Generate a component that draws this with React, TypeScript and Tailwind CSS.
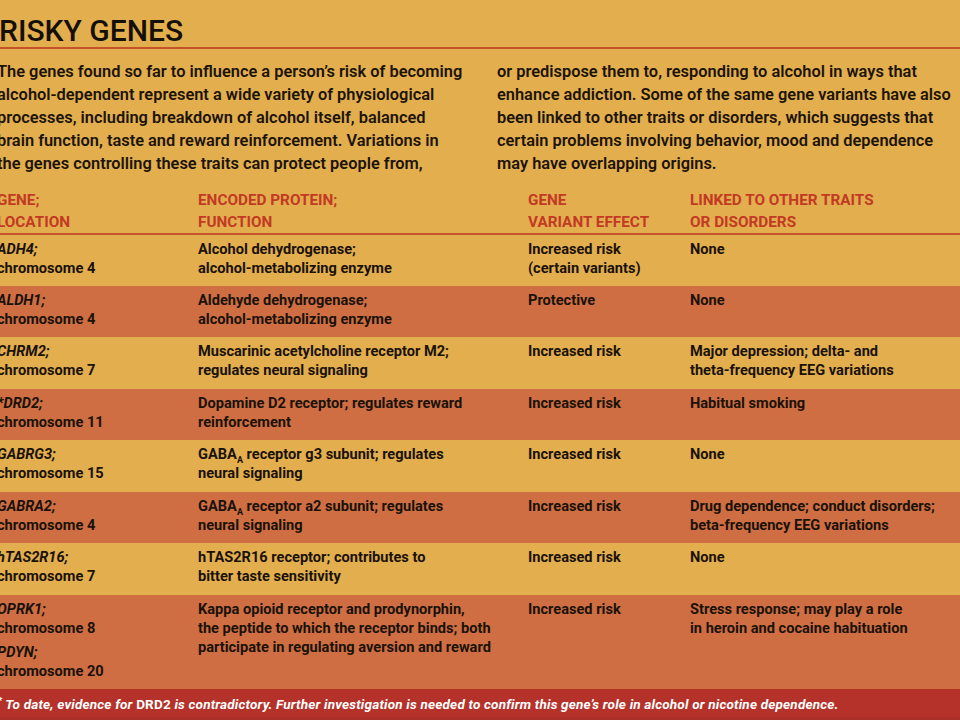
import React from "react";

type Row = {
  gene: React.ReactNode;
  protein: React.ReactNode;
  effect: React.ReactNode;
  linked: React.ReactNode;
  h: string;
  tone: "y" | "o";
};

const Gene = ({ name, loc }: { name: string; loc: string }) => (
  <div>
    <div className="italic">{name};</div>
    <div>{loc}</div>
  </div>
);

const GabaA = () => (
  <>
    GABA<sub className="text-[9px] align-[-2px]">A</sub>
  </>
);

const ROWS: Row[] = [
  {
    gene: <Gene name="ADH4" loc="chromosome 4" />,
    protein: <>Alcohol dehydrogenase;<br />alcohol-metabolizing enzyme</>,
    effect: <>Increased risk<br />(certain variants)</>,
    linked: "None",
    h: "h-[51px]",
    tone: "y",
  },
  {
    gene: <Gene name="ALDH1" loc="chromosome 4" />,
    protein: <>Aldehyde dehydrogenase;<br />alcohol-metabolizing enzyme</>,
    effect: "Protective",
    linked: "None",
    h: "h-[51px]",
    tone: "o",
  },
  {
    gene: <Gene name="CHRM2" loc="chromosome 7" />,
    protein: <>Muscarinic acetylcholine receptor M2;<br />regulates neural signaling</>,
    effect: "Increased risk",
    linked: <>Major depression; delta- and<br />theta-frequency EEG variations</>,
    h: "h-[52px]",
    tone: "y",
  },
  {
    gene: <Gene name="*DRD2" loc="chromosome 11" />,
    protein: <>Dopamine D2 receptor; regulates reward<br />reinforcement</>,
    effect: "Increased risk",
    linked: "Habitual smoking",
    h: "h-[51px]",
    tone: "o",
  },
  {
    gene: <Gene name="GABRG3" loc="chromosome 15" />,
    protein: <><GabaA /> receptor g3 subunit; regulates<br />neural signaling</>,
    effect: "Increased risk",
    linked: "None",
    h: "h-[52px]",
    tone: "y",
  },
  {
    gene: <Gene name="GABRA2" loc="chromosome 4" />,
    protein: <><GabaA /> receptor a2 subunit; regulates<br />neural signaling</>,
    effect: "Increased risk",
    linked: <>Drug dependence; conduct disorders;<br />beta-frequency EEG variations</>,
    h: "h-[51px]",
    tone: "o",
  },
  {
    gene: <Gene name="hTAS2R16" loc="chromosome 7" />,
    protein: <>hTAS2R16 receptor; contributes to<br />bitter taste sensitivity</>,
    effect: "Increased risk",
    linked: "None",
    h: "h-[52px]",
    tone: "y",
  },
  {
    gene: (
      <div className="flex flex-col gap-[5px]">
        <Gene name="OPRK1" loc="chromosome 8" />
        <Gene name="PDYN" loc="chromosome 20" />
      </div>
    ),
    protein: (
      <>
        Kappa opioid receptor and prodynorphin,
        <br />
        the peptide to which the receptor binds; both
        <br />
        participate in regulating aversion and reward
      </>
    ),
    effect: "Increased risk",
    linked: <>Stress response; may play a role<br />in heroin and cocaine habituation</>,
    h: "h-[94px]",
    tone: "o",
  },
];

export default function App() {
  return (
    <div
      className="w-[960px] h-[720px] overflow-hidden bg-[#e3ae4e] text-[#1c1408] flex flex-col"
      style={{ fontFamily: "Roboto, 'Noto Sans', sans-serif" }}
    >
      <div className="h-[49px] shrink-0 flex items-end border-b-2 border-[#c4522a]">
        <h1 className="-ml-[1px] text-[30px] leading-none font-medium pb-[1px] text-[#141008]">
          RISKY GENES
        </h1>
      </div>

      <div className="mt-[11px] -ml-[3px] grid grid-cols-[500px_1fr] text-[16.4px] leading-[23px] font-semibold">
        <p>
          The genes found so far to influence a person’s risk of becoming
          <br />
          alcohol-dependent represent a wide variety of physiological
          <br />
          processes, including breakdown of alcohol itself, balanced
          <br />
          brain function, taste and reward reinforcement. Variations in
          <br />
          the genes controlling these traits can protect people from,
        </p>
        <p>
          or predispose them to, responding to alcohol in ways that
          <br />
          enhance addiction. Some of the same gene variants have also
          <br />
          been linked to other traits or disorders, which suggests that
          <br />
          certain problems involving behavior, mood and dependence
          <br />
          may have overlapping origins.
        </p>
      </div>

      <div className="mt-[14px] -ml-[3px] grid grid-cols-[201px_330px_162px_1fr] text-[15.3px] leading-[22px] font-bold text-[#c23a24]">
        <div>GENE;<br />LOCATION</div>
        <div>ENCODED PROTEIN;<br />FUNCTION</div>
        <div>GENE<br />VARIANT EFFECT</div>
        <div>LINKED TO OTHER TRAITS<br />OR DISORDERS</div>
      </div>
      <div className="h-[2px] shrink-0 bg-[#c4522a]" />

      <div className="flex flex-col shrink-0">
        {ROWS.map((r, i) => (
          <div
            key={i}
            className={`${r.h} ${r.tone === "y" ? "bg-[#e3ae4e]" : "bg-[#cf6e43]"} pt-[5px] -ml-[3px] grid grid-cols-[201px_330px_162px_1fr] text-[14.6px] leading-[19px] font-bold text-[#1a1208]`}
          >
            <div>{r.gene}</div>
            <div>{r.protein}</div>
            <div>{r.effect}</div>
            <div>{r.linked}</div>
          </div>
        ))}
      </div>

      <div className="flex-1 bg-[#b5322a] border-b-[3px] border-[#a92f28] flex items-center pt-[2px]">
        <p className="-ml-[2px] text-[13.5px] italic font-bold text-white tracking-[0.2px]">
          <sup className="text-[9px]">*</sup> To date, evidence for <span className="not-italic">DRD2</span> is
          contradictory. Further investigation is needed to confirm this gene’s role in alcohol or nicotine
          dependence.
        </p>
      </div>
    </div>
  );
}
